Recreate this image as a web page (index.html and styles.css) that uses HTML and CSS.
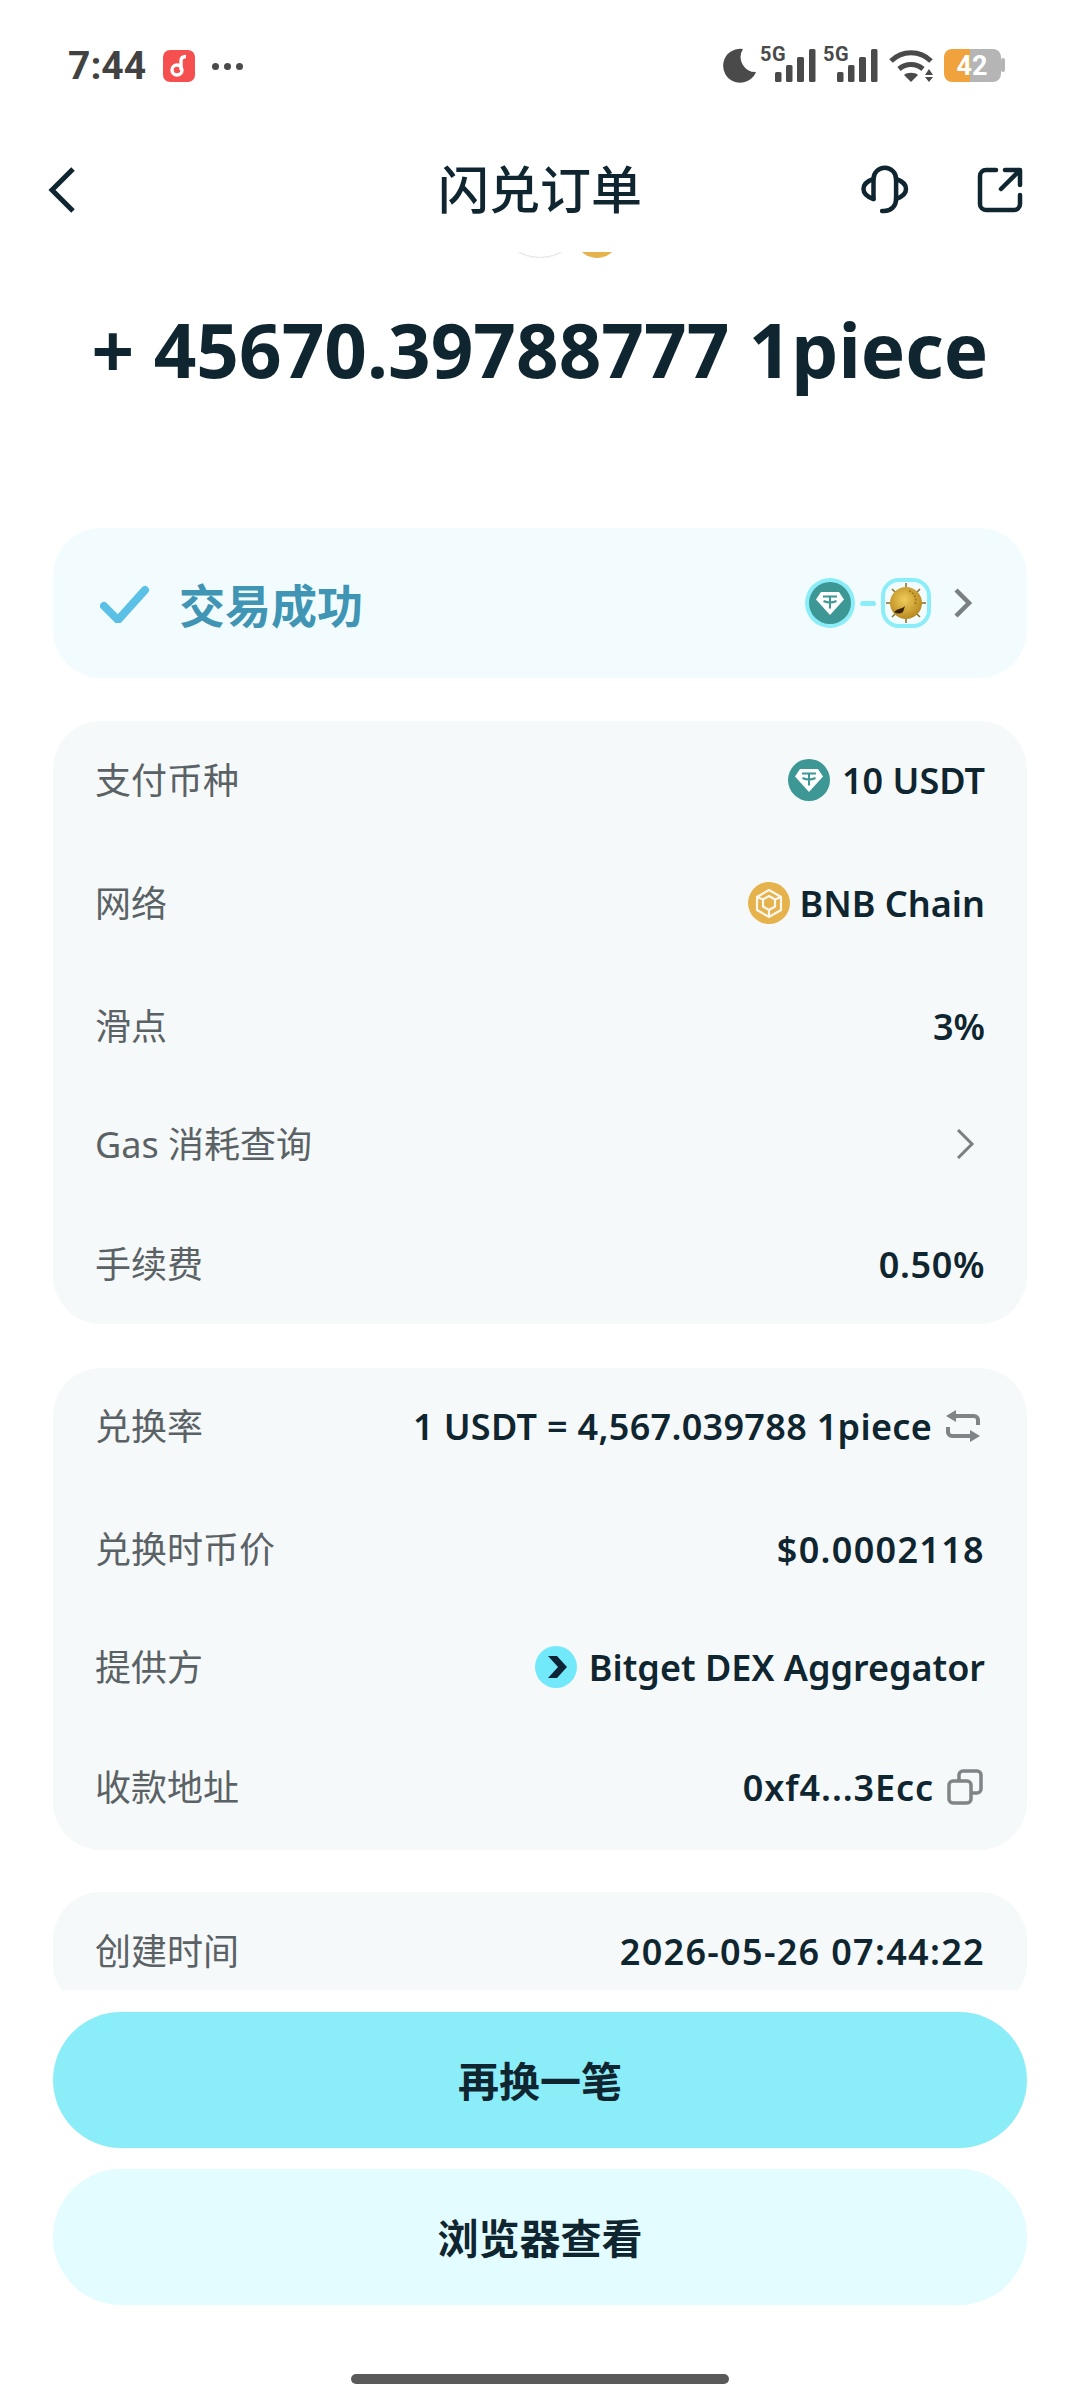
FILE: index.html

```html
<!DOCTYPE html>
<html lang="zh-CN">
<head>
  <meta charset="UTF-8">
  <meta name="viewport" content="width=device-width, initial-scale=1.0">
  <title>闪兑订单</title>
  <link rel="stylesheet" href="styles.css">
</head>
<body>

  <div class="page">

    <div class="statusbar">
      <div class="status-left">
        <span class="clock">7:44</span>
        <svg class="music" viewBox="0 0 32 32" width="32" height="32">
          <rect width="32" height="32" rx="7" fill="#f5504f"/>
          <circle cx="14" cy="20" r="5" fill="none" stroke="#fff" stroke-width="3.4"/>
          <path d="M18 20V11c0-3 2-4.500 5-4.500" fill="none" stroke="#fff" stroke-width="3.4"/>
        </svg>
        <span class="dots"><i></i><i></i><i></i></span>
      </div>
      <svg class="status-right" viewBox="0 -12 290 50" width="290" height="50">
        <path d="M23 1A17 17 0 1 0 36 24A15 15 0 0 1 23 1z" fill="#4a4a4a"/>
        <text class="net" x="40" y="13">5G</text>
        <g fill="#4a4a4a">
          <rect x="55" y="24" width="6.500" height="10" rx="1.500"/>
          <rect x="66" y="17" width="6.500" height="17" rx="1.500"/>
          <rect x="77" y="9" width="7" height="25" rx="1.500"/>
          <rect x="89" y="1" width="6.500" height="33" rx="1.500"/>
        </g>
        <text class="net" x="103" y="13">5G</text>
        <g fill="#4a4a4a">
          <rect x="117" y="24" width="6.500" height="10" rx="1.500"/>
          <rect x="128" y="17" width="6.500" height="17" rx="1.500"/>
          <rect x="139" y="9" width="7" height="25" rx="1.500"/>
          <rect x="151" y="1" width="6.500" height="33" rx="1.500"/>
        </g>
        <g fill="none" stroke="#4a4a4a" stroke-width="5">
          <path d="M171 13c11-11 29-11 40 0"/>
          <path d="M179 21c7-6 17-6 24 0"/>
        </g>
        <path d="M184 27c3-3 11-3 14 0l-7 7z" fill="#4a4a4a"/>
        <path d="M205 27l4-6 4 6zM205 29l4 5 4-5z" fill="#4a4a4a"/>
        <path d="M250 1h-18a8 8 0 0 0-8 8v17a8 8 0 0 0 8 8h18z" fill="#f0a33c"/>
        <path d="M250 1h23a8 8 0 0 1 8 8v17a8 8 0 0 1-8 8h-23z" fill="#b5b5b5"/>
        <rect x="281" y="10" width="4" height="14" rx="2" fill="#b5b5b5"/>
        <text class="bat" x="252" y="27" text-anchor="middle">42</text>
      </svg>
    </div>

    <header class="topbar">
      <svg class="back" viewBox="0 0 30 50" width="30" height="50">
        <path d="M26 4L5 25l21 21" fill="none" stroke="#0f2530" stroke-width="5"/>
      </svg>
      <h1>闪兑订单</h1>
      <div class="top-actions">
        <svg viewBox="0 0 50 50" width="50" height="50" fill="none" stroke="#0f2530" stroke-width="4.500" stroke-linecap="round">
          <path d="M13.500 34V14a11.300 11.300 0 0 1 22.600 0v20c0 7-5 12-12 12h-2"/>
          <path d="M13.500 14c-6 2-10 5-10 10s4 8 10 10"/>
          <path d="M36 14c6 2 10 5 10 10s-4 8-10 10"/>
        </svg>
        <svg viewBox="0 0 46 46" width="46" height="46" fill="none" stroke="#0f2530" stroke-width="4.500" stroke-linecap="round" stroke-linejoin="round">
          <path d="M19 3H9a6 6 0 0 0-6 6v28a6 6 0 0 0 6 6h28a6 6 0 0 0 6-6V28"/>
          <path d="M24 22L42 4M28 3h15v15"/>
        </svg>
      </div>
    </header>

    <main class="content">
      <div class="hero-logos">
        <span class="logo-white"></span>
        <span class="logo-yellow"></span>
      </div>
      <div class="amount">+ 45670.39788777 1piece</div>

      <div class="status-card">
        <svg class="check" viewBox="0 0 50 40" width="50" height="40">
          <path d="M4 23l14 14L45 7" fill="none" stroke="#5bc0e6" stroke-width="8" stroke-linecap="round" stroke-linejoin="round"/>
        </svg>
        <span class="status-text">交易成功</span>
        <div class="pair">
          <span class="ring">
            <svg viewBox="0 0 42 42" width="42" height="42"><use href="#usdt"/></svg>
          </span>
          <span class="pair-dash"></span>
          <span class="ring ring-square">
            <svg viewBox="0 0 42 42" width="42" height="42"><use href="#coin"/></svg>
          </span>
        </div>
        <svg class="chevron" viewBox="0 0 20 30" width="20" height="30">
          <path d="M3 2l13 13L3 28" fill="none" stroke="#7a7f82" stroke-width="4.500"/>
        </svg>
      </div>

      <section class="card">
        <div class="row">
          <span class="label">支付币种</span>
          <span class="value">
            <svg viewBox="0 0 42 42" width="42" height="42"><use href="#usdt"/></svg>
            10 USDT
          </span>
        </div>
        <div class="row row-far">
          <span class="label">网络</span>
          <span class="value">
            <svg class="bnb" viewBox="0 0 42 42" width="42" height="42">
              <circle cx="21" cy="21" r="21" fill="#e6b24c"/>
              <g fill="none" stroke="#fff" stroke-width="2.200" opacity=".9">
                <path d="M21 8l12 7v13l-12 7-12-7V15z"/>
                <path d="M21 14l6 3.500v7L21 28l-6-3.500v-7zM9 15l6 2.500M33 15l-6 2.500M21 28v7"/>
              </g>
            </svg>
            BNB Chain
          </span>
        </div>
        <div class="row row-far">
          <span class="label">滑点</span>
          <span class="value">3%</span>
        </div>
        <div class="row row-near">
          <span class="label">Gas 消耗查询</span>
          <svg class="chevron chevron-gas" viewBox="0 0 20 30" width="20" height="30">
            <path d="M2 1l14 14L2 29" fill="none" stroke="#7a7f82" stroke-width="3"/>
          </svg>
        </div>
        <div class="row">
          <span class="label">手续费</span>
          <span class="value num-s">0.50%</span>
        </div>
      </section>

      <section class="card card-second">
        <div class="row">
          <span class="label">兑换率</span>
          <span class="value num-xs">
            1 USDT = 4,567.039788 1piece
            <svg class="swap" viewBox="0 0 36 32" width="36" height="32" fill="none" stroke="#7f8487" stroke-width="4">
              <path d="M10 6h19a4 4 0 0 1 4 4v5M26 26H7a4 4 0 0 1-4-4v-5"/>
              <path d="M11 0L1 6l10 6zM25 20l10 6-10 6z" fill="#7f8487" stroke="none"/>
            </svg>
          </span>
        </div>
        <div class="row row-far">
          <span class="label">兑换时币价</span>
          <span class="value num">$0.0002118</span>
        </div>
        <div class="row row-near">
          <span class="label">提供方</span>
          <span class="value">
            <svg class="bitget" viewBox="0 0 42 42" width="42" height="42">
              <circle cx="21" cy="21" r="21" fill="#71e9fb"/>
              <path d="M13 10h9l10 11-10 11h-9l10-11z" fill="#0d2436"/>
            </svg>
            Bitget DEX Aggregator
          </span>
        </div>
        <div class="row">
          <span class="label">收款地址</span>
          <span class="value num-m">
            0xf4...3Ecc
            <svg class="copy" viewBox="0 0 36 36" width="36" height="36" fill="none" stroke="#7f8487" stroke-width="3.500">
              <path d="M12 11V6a4 4 0 0 1 4-4h14a4 4 0 0 1 4 4v14a4 4 0 0 1-4 4h-5"/>
              <rect x="2" y="12" width="22" height="22" rx="4"/>
            </svg>
          </span>
        </div>
      </section>

      <section class="card">
        <div class="row">
          <span class="label">创建时间</span>
          <span class="value num">2026-05-26 07:44:22</span>
        </div>
      </section>
    </main>

    <div class="actions">
      <button class="btn btn-main">再换一笔</button>
      <button class="btn btn-soft">浏览器查看</button>
    </div>

    <div class="homebar"></div>
  </div>

  <!-- shared coin icons -->
  <svg class="defs" width="0" height="0">
    <defs>
      <radialGradient id="gold" cx="45%" cy="40%" r="60%">
        <stop offset="0" stop-color="#f0cb5c"/>
        <stop offset="1" stop-color="#b98a1e"/>
      </radialGradient>
      <g id="usdt">
        <circle cx="21" cy="21" r="21" fill="#3d9795"/>
        <path d="M12 10h18l5 7.500L21 33 7 17.500z" fill="#fff"/>
        <path d="M14 14.500h14M21 14.500v12M14.500 19c4 1.800 9 1.800 13 0" fill="none" stroke="#3d9795" stroke-width="2"/>
      </g>
      <g id="coin">
        <path d="M21 1v40M1 21h40M7 7l28 28M35 7L7 35" stroke="#8a6a1c" stroke-width="1.500"/>
        <circle cx="21" cy="21" r="16" fill="url(#gold)"/>
        <path d="M9 30c4-4 8-3 11-6l-2 6c-3 2-6 2-9 0z" fill="#3a2410"/>
        <path d="M24 9c6 2 8 8 6 14" fill="none" stroke="#a3781f" stroke-width="2" stroke-dasharray="2 1.500"/>
      </g>
    </defs>
  </svg>

</body>
</html>
```

FILE: styles.css

```css
* {
  box-sizing: border-box;
}
body {
  margin: 0;
  background: #fff;
  font-family: "Noto Sans", "Noto Sans CJK SC", sans-serif;
  color: #0f2530;
}
.page {
  width: 1080px;
  height: 2400px;
  overflow: hidden;
  display: flex;
  flex-direction: column;
}
.defs {
  display: block;
}

/* status bar */
.statusbar {
  height: 120px;
  padding: 30px 0 0 68px;
  display: flex;
  justify-content: space-between;
  align-items: flex-start;
}
.status-left {
  display: flex;
  align-items: center;
  height: 34px;
  margin-top: 19px;
}
.clock {
  font-family: "Roboto", sans-serif;
  font-size: 39px;
  font-weight: 700;
  color: #424242;
  width: 95px;
}
.dots {
  display: flex;
  gap: 5px;
  margin-left: 17px;
}
.dots i {
  width: 7px;
  height: 7px;
  border-radius: 50%;
  background: #4a4a4a;
}
.status-right {
  margin: 6px 70px 0 0;
}
.net {
  font-family: "Roboto", sans-serif;
  font-size: 20px;
  font-weight: 700;
  letter-spacing: 0.5px;
  fill: #4a4a4a;
}
.bat {
  font-family: "Roboto", sans-serif;
  font-size: 27px;
  font-weight: 700;
  fill: #fff;
}

/* title bar */
.topbar {
  height: 132px;
  padding: 7px 57px 0;
  display: grid;
  grid-template-columns: 1fr auto 1fr;
  align-items: center;
}
.back {
  margin-left: -10px;
}
.topbar h1 {
  margin: 0 0 6px;
  font-size: 51px;
  font-weight: 500;
}
.top-actions {
  display: flex;
  justify-content: flex-end;
  gap: 67px;
  align-items: center;
}

/* scroll area */
.content {
  height: 1738px;
  padding: 0 53px;
  overflow: hidden;
}
.hero-logos {
  height: 6px;
  margin-bottom: 31px;
  overflow: hidden;
  position: relative;
}
.logo-white {
  position: absolute;
  left: 445px;
  top: -79px;
  width: 84px;
  height: 84px;
  border-radius: 50%;
  background: #fff;
  box-shadow: 0 1px 2px #ddd;
}
.logo-yellow {
  position: absolute;
  left: 522px;
  top: -38px;
  width: 44px;
  height: 44px;
  border-radius: 50%;
  background: #e6b24c;
}
.amount {
  height: 120px;
  line-height: 120px;
  margin-bottom: 119px;
  text-align: center;
  font-size: 74.6px;
  font-weight: 700;
  white-space: nowrap;
}

.status-card {
  height: 150px;
  margin-bottom: 43px;
  padding: 0 54px 0 47px;
  background: #f2fcff;
  border-radius: 48px;
  display: flex;
  align-items: center;
}
.status-text {
  margin-left: 29px;
  font-size: 46px;
  font-weight: 700;
  color: #3f95b3;
}
.pair {
  margin-left: auto;
  display: flex;
  align-items: center;
  gap: 5px;
}
.ring {
  width: 50px;
  height: 50px;
  padding: 4px;
  border-radius: 50%;
  background: #8aedf8;
  display: block;
}
.ring svg {
  display: block;
}
.ring-square {
  border-radius: 18px;
  background: #f2fcff;
  border: 4px solid #8aedf8;
  padding: 0;
}
.pair-dash {
  width: 16px;
  height: 5px;
  border-radius: 3px;
  background: #8aedf8;
}
.status-card .chevron {
  margin-left: 22px;
}

/* info cards */
.card {
  background: #f6f9f9;
  border-radius: 48px;
  padding: 34px 42px 35px;
  margin-bottom: 44px;
}
.card-second {
  padding-top: 33px;
  padding-bottom: 38px;
  margin-bottom: 42px;
}
.row {
  height: 50px;
  display: flex;
  justify-content: space-between;
  align-items: center;
}
.row + .row {
  margin-top: 70px;
}
.row + .row-far {
  margin-top: 73px;
}
.row + .row-near {
  margin-top: 68px;
}
.label {
  margin-top: -3px;
  font-size: 36px;
  color: #5a6266;
}
.value {
  display: flex;
  align-items: center;
  gap: 12px;
  font-size: 36px;
  font-weight: 600;
  white-space: nowrap;
}
/* digits run a little wider than Noto Sans */
.num {
  letter-spacing: 1.3px;
}
.num-m {
  letter-spacing: 0.9px;
}
.num-s {
  letter-spacing: 0.6px;
}
.num-xs {
  letter-spacing: 0.3px;
}
.bnb {
  margin-right: -3px;
}
.bitget {
  margin-left: -4px;
}
.swap {
  margin: 0 4px 0 1px;
}
.copy {
  margin: 0 2px 0 1px;
}
.chevron-gas {
  margin-right: 9px;
}

/* bottom buttons */
.actions {
  padding: 22px 53px 0;
  display: flex;
  flex-direction: column;
  gap: 21px;
}
.btn {
  height: 136px;
  flex: none;
  padding: 0 0 3px;
  border: none;
  border-radius: 68px;
  font-family: inherit;
  font-size: 41px;
  font-weight: 700;
  color: #0f2530;
}
.btn-main {
  background: #8aedf8;
}
.btn-soft {
  background: #e3fcff;
  font-weight: 600;
}
.homebar {
  width: 378px;
  height: 10px;
  margin: 69px auto 0;
  border-radius: 5px;
  background: #5a5a5a;
}
```
